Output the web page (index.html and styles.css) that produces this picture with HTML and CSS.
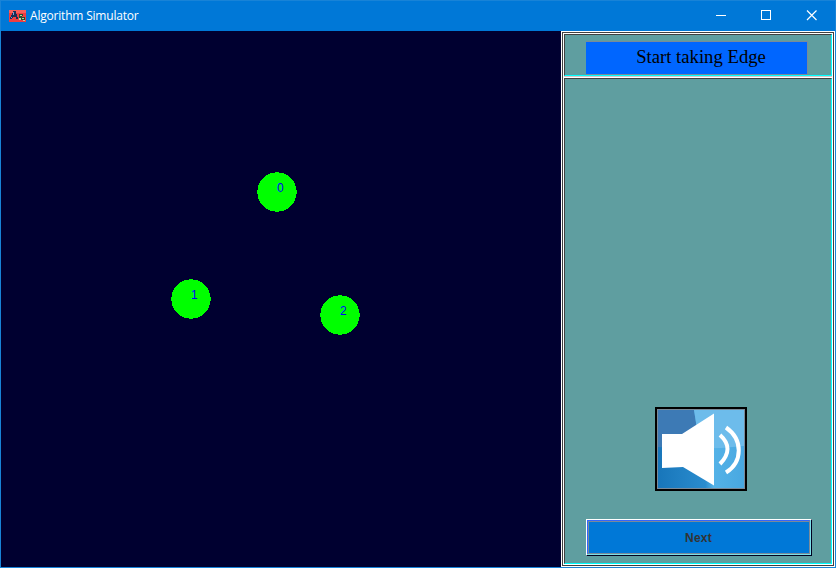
FILE: index.html
```html
<!DOCTYPE html>
<html lang="en">
<head>
<meta charset="utf-8">
<title>Algorithm Simulator</title>
<link rel="stylesheet" href="styles.css">
</head>
<body>
<div class="window">
  <header class="titlebar">
    <svg class="app-icon" width="17" height="12" viewBox="0 0 17 12" shape-rendering="crispEdges">
      <rect width="17" height="12" fill="#f03e40"/>
      <path d="M0 0h17v3H0z" fill="#f8605c"/>
      <path d="M1 7h1V5h1V3h1V1h3v3h1v3h1v2H7V7H4v1H3v1H1z" fill="#172f58"/>
      <path d="M4 2h1v3H4zM2 7h1v1H2z" fill="#7f9fd0"/>
      <path d="M10 4h4v2h-1v1h3v4h-2v-1h-3V8h-1z" fill="#294b32"/>
      <path d="M11 5h2v1h-2zM13 8h2v1h-2zM10 8h2v2h-2zM14 10h2v1h-2z" fill="#b5d59c"/>
    </svg>
    <span class="title">Algorithm Simulator</span>
    <svg class="controls" width="138" height="30" viewBox="0 0 138 30" fill="none" stroke="#fff">
      <path d="M19 14.500h10"/>
      <rect x="64.500" y="9.500" width="9" height="9"/>
      <path d="M110 9.500l9.500 9.500M119.500 9.500l-9.500 9.500" stroke-width="1.15"/>
    </svg>
  </header>
  <main class="content">
    <svg class="graph" width="560" height="536" viewBox="1 31 560 536">
      <g fill="#0f0" shape-rendering="crispEdges">
        <circle cx="277" cy="192" r="19.700"/>
        <circle cx="191" cy="299" r="19.700"/>
        <circle cx="340" cy="315" r="19.700"/>
      </g>
      <g class="node-label">
        <text x="277" y="192">0</text>
        <text x="191" y="299">1</text>
        <text x="340" y="315">2</text>
      </g>
    </svg>
    <aside class="panel">
      <div class="panel-inner">
        <div class="panel-head"><div class="edge-button">Start taking Edge</div></div>
        <div class="divider"></div>
        <div class="panel-body">
          <div class="sound">
            <svg width="86" height="78" viewBox="0 0 86 78">
              <defs>
                <linearGradient id="sky" x1="0" y1="1" x2="1" y2="0">
                  <stop offset="0" stop-color="#1674b8"/><stop offset=".48" stop-color="#328fce"/><stop offset="1" stop-color="#72c2ed"/>
                </linearGradient>
                <linearGradient id="low" x1="0" y1="0" x2="1" y2="0">
                  <stop offset="0" stop-color="#1876ba"/><stop offset=".55" stop-color="#2a8cce"/><stop offset=".65" stop-color="#54b2e7"/><stop offset="1" stop-color="#48a8e1"/>
                </linearGradient>
              </defs>
              <rect width="86" height="78" fill="url(#sky)"/>
              <path d="M0 0h36l6 38H0z" fill="#3d7ab5"/>
              <path d="M36 0h50v36q-22 4-44 2z" fill="#6dbceb"/>
              <path d="M0 37q43 4 86-1v42H0z" fill="url(#low)"/>
              <path d="M4 24h20L56 3.500v72L25 57 4 58z" fill="#fff"/>
              <path d="M62 25q15 13.500 0 29M68 17.500c17 12 17 34 0 45" fill="none" stroke="#fff" stroke-width="4"/>
            </svg>
          </div>
          <div class="next-button"><span>Next</span></div>
        </div>
      </div>
    </aside>
  </main>
</div>
</body>
</html>
```
FILE: styles.css
```css
* { box-sizing: border-box; }
body { margin: 0; overflow: hidden; }
.window {
  width: 836px;
  height: 568px;
  border: 1px solid #1883d7;
  background: #0078d7;
  display: flex;
  flex-direction: column;
}
.titlebar {
  height: 30px;
  display: flex;
  align-items: center;
  padding-left: 8px;
  color: #fff;
}
.app-icon { margin-top: -1px; }
.title {
  margin-left: 4px;
  font: 12px/16px "Open Sans", sans-serif;
  letter-spacing: -0.2px;
}
.controls { margin-left: auto; }
.content { height: 536px; display: flex; }
.graph { background: #000030; display: block; }
.node-label {
  fill: #00f;
  font: 12px "Liberation Sans", sans-serif;
}
.panel {
  width: 274px;
  border: 1px solid #fff;
  background: #fff;
}
.panel-inner {
  height: 534px;
  border: 1px solid #404040;
  padding: 1px;
  display: flex;
  flex-direction: column;
}
.panel-head, .panel-body {
  background: #5f9ea0;
  border: 1px solid #404040;
  border-right-color: #00ffff;
  border-bottom-color: #00ffff;
}
.panel-head { height: 42px; padding: 6px 0 0 21px; }
.edge-button {
  width: 222px;
  height: 34px;
  padding-left: 9px;
  background: #0066ff;
  border: 1px solid #7a8a99;
  border-left: 0;
  font: 18.7px/29px "Liberation Serif", serif;
  text-align: center;
  white-space: nowrap;
  color: #000;
}
.divider { height: 2px; background: #fff; border-top: 1px solid #d4c8c8; }
.panel-body {
  flex: 1;
  padding: 0 0 7px 21px;
  display: flex;
  flex-direction: column;
  justify-content: flex-end;
}
.sound {
  width: 92px;
  height: 84px;
  margin: 0 0 28px 69px;
  border: 2px solid #000;
  outline: 1px solid #7a8a99;
  outline-offset: -3px;
  padding: 1px;
}
.sound svg { display: block; }
.next-button {
  width: 226px;
  height: 37px;
  border: 1px solid #fff;
  border-right-color: #000020;
  border-bottom-color: #000020;
  background: #7ce0e8;
  padding: 0 1px 1px 0;
}
.next-button span {
  height: 34px;
  display: block;
  border: 1px solid #7a8a99;
  border-top-color: #3366ff;
  border-left-color: #3366ff;
  box-shadow: inset 1px 1px 0 #7a8a99;
  background: #0078d7;
  font: bold 12px/34px "Liberation Sans", sans-serif;
  letter-spacing: 0.2px;
  text-align: center;
  color: #333;
}
```
